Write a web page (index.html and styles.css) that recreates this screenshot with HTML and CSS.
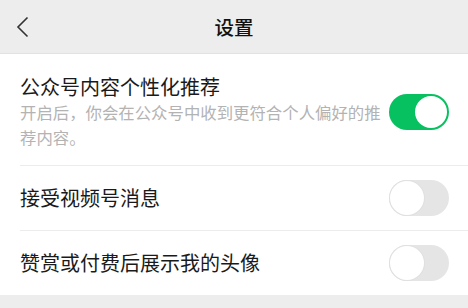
FILE: index.html
```html
<!DOCTYPE html>
<html lang="zh-CN">
<head>
  <meta charset="UTF-8">
  <meta name="viewport" content="width=device-width, initial-scale=1.0">
  <title>设置</title>
  <link rel="stylesheet" href="styles.css">
</head>
<body>
  <div class="navbar">
    <span class="back">
      <svg width="14" height="22" viewBox="0 0 14 22">
        <path d="M11.5 1.5 L2 11 L11.5 20.5" fill="none" stroke="#333" stroke-width="1.6"/>
      </svg>
    </span>
    <h1 class="nav-title">设置</h1>
  </div>

  <div class="list">
    <div class="cell cell-tall">
      <div class="cell-body">
        <div class="cell-title">公众号内容个性化推荐</div>
        <div class="cell-desc">开启后，你会在公众号中收到更符合个人偏好的推荐内容。</div>
      </div>
      <span class="switch on"></span>
    </div>
    <div class="cell">
      <div class="cell-body">
        <div class="cell-title">接受视频号消息</div>
      </div>
      <span class="switch"></span>
    </div>
    <div class="cell">
      <div class="cell-body">
        <div class="cell-title">赞赏或付费后展示我的头像</div>
      </div>
      <span class="switch"></span>
    </div>
  </div>
</body>
</html>
```

FILE: styles.css
```css
body {
  margin: 0;
  background-color: #ededed;
  font-family: "Noto Sans CJK SC", "Noto Sans", sans-serif;
  color: #1a1a1a;
}

.navbar {
  height: 54px;
  display: flex;
  align-items: center;
  justify-content: center;
  position: relative;
  border-bottom: 1px solid #e2e2e2;
  box-sizing: border-box;
}

.back {
  position: absolute;
  left: 16px;
  top: 16px;
}

.nav-title {
  margin: 0;
  font-size: 19.5px;
  font-weight: 500;
  color: #111;
}

.list {
  background-color: #fff;
}

.cell {
  display: flex;
  align-items: center;
  height: 65px;
  padding: 0 19px 0 20px;
  position: relative;
}

.cell + .cell::before {
  content: "";
  position: absolute;
  top: 0;
  left: 20px;
  right: 0;
  border-top: 1px solid #ececec;
}

.cell-tall {
  height: auto;
  padding-top: 20px;
  padding-bottom: 15px;
}

.cell-body {
  flex: 1;
  min-width: 0;
}

.cell-title {
  font-size: 20px;
  line-height: 26px;
}

.cell-desc {
  font-size: 16.4px;
  line-height: 25px;
  color: #b3b3b3;
}

.switch {
  flex: none;
  width: 60px;
  height: 36px;
  margin-left: 6px;
  border-radius: 18px;
  background-color: #e5e5e5;
  position: relative;
}

.switch::after {
  content: "";
  position: absolute;
  top: 1px;
  left: 1px;
  width: 34px;
  height: 34px;
  border-radius: 50%;
  background-color: #fff;
  box-shadow: 0 0 0 1px #e0e0e0;
}

.switch.on {
  background-color: #07c160;
}

.switch.on::after {
  left: 26px;
  top: 2px;
  width: 32px;
  height: 32px;
  box-shadow: none;
}
```
